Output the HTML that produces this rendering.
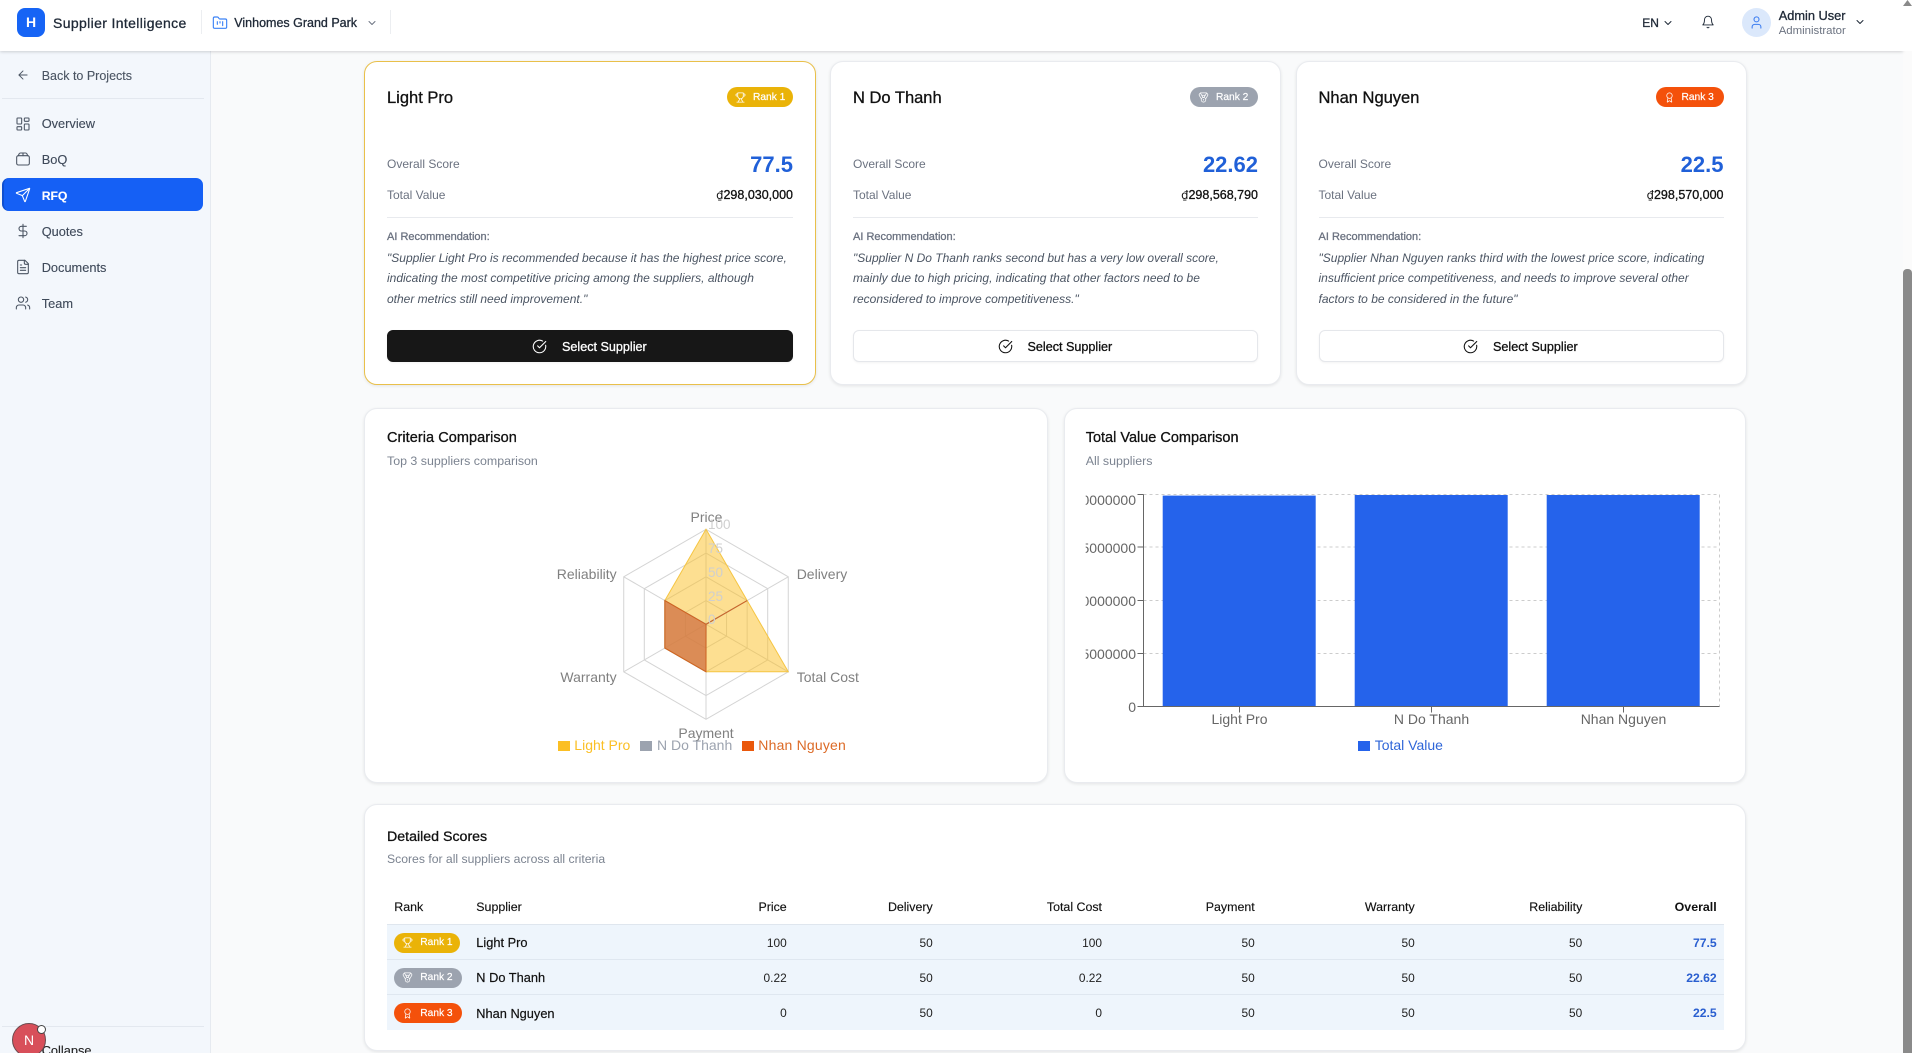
<!DOCTYPE html>
<html lang="en"><head><meta charset="utf-8"><title>Supplier Intelligence</title>
<style>
*{box-sizing:border-box}
html,body{margin:0;padding:0;width:1912px;height:1053px;overflow:hidden;background:#f9fafb;font-family:"Liberation Sans",sans-serif;color:#111827}
#app{position:absolute;left:0;top:0;width:1912px;height:1053px;overflow:hidden;background:#f9fafb}
.t{position:absolute;white-space:nowrap;line-height:20px}
.m{-webkit-text-stroke:.3px currentColor}
.i{position:absolute;fill:none;stroke:currentColor;stroke-width:2;stroke-linecap:round;stroke-linejoin:round}
.d{font-family:"DejaVu Sans",sans-serif;font-size:11.5px;-webkit-text-stroke:0}
header{position:absolute;left:0;top:0;width:1903px;height:51px;background:#fff;box-shadow:0 1px 3px rgba(0,0,0,.16);z-index:5}
.hw{position:absolute;left:1903px;top:0;width:9px;height:51px;background:#fff;z-index:5}
.sep{position:absolute;top:10px;width:1px;height:24px;background:#eceef1}
.logo{position:absolute;left:17px;top:8px;width:28px;height:29px;border-radius:8px;background:#1664f5;color:#fff;font-weight:700;font-size:14px;line-height:29px;text-align:center}
aside{position:absolute;left:0;top:51px;width:211px;height:1002px;background:#f3f7fc;border-right:1px solid #e6eaf0}
aside .t{left:41.7px;font-size:12.8px;color:#3f4a5a;-webkit-text-stroke:.12px currentColor}
aside .i{left:15px;width:16px;height:16px;stroke-width:1.6;color:#4b5563}
.div{position:absolute;left:2px;width:202px;height:1px;background:#e3e8ef}
.act{position:absolute;left:2px;top:127px;width:201px;height:33px;border-radius:7px;background:#1560f5;border-left:2px solid #0f4fd0}
.card{position:absolute;background:#fff;border:1px solid #e9ebef;border-radius:13px;box-shadow:0 1px 3px rgba(0,0,0,.09)}
.sup{top:61px;height:324px}
.gold{border:1.5px solid #e9c04a}
.name{left:22px;top:26px;font-size:16.5px;color:#111}
.badge{position:absolute;height:20px;border-radius:10px;color:#fff}
.badge span{position:absolute;left:26px;top:.5px;font-size:10.2px;line-height:20px;white-space:nowrap;-webkit-text-stroke:.2px #fff}
.badge .i{left:8px;top:4.5px;width:11px;height:11px;stroke-width:1.6}
.b1{background:#eab308;width:66px}.b2{background:#9ca3af;width:68px}.b3{background:#f4510b;width:68px}
.card .badge{top:25px;right:22px}
.lab{left:22px;font-size:12px;color:#6b7280}
.score{right:22px;top:93px;font-size:22px;font-weight:700;color:#2060d8}
.val{right:22px;top:122.7px;font-size:12.5px;color:#111}
.hr{position:absolute;left:22px;right:22px;top:155px;height:1px;background:#e8eaee}
.ai{left:22px;top:165px;font-size:11px;color:#6b7280}
.q{left:22px;font-size:12px;font-style:italic;color:#4b5563}
.btn{position:absolute;left:22px;right:22px;top:268px;height:32px;border-radius:6px;border:1px solid #e5e7eb;background:#fff;color:#111;box-shadow:0 1px 2px rgba(0,0,0,.05)}
.btn.dark{background:#171717;border-color:#171717;color:#fff}
.btn span{position:absolute;left:50%;margin-left:-28px;top:5.5px;font-size:12.6px;line-height:20px;white-space:nowrap;-webkit-text-stroke:.3px currentColor}
.btn .i{left:50%;margin-left:-58px;top:7.5px;width:15px;height:15px;stroke-width:1.7}
.ct{font-size:14.5px;color:#111}
.cs{font-size:12.4px;color:#7b8390}
svg text{font-family:"Liberation Sans",sans-serif}
table{position:absolute;left:387px;top:888px;width:1337px;border-collapse:collapse;table-layout:fixed;font-size:11.9px;color:#222}
th{height:36px;font-weight:400;font-size:12.4px;text-align:right;padding:2px 7.3px 0;color:#111;border-bottom:1px solid #dfe6ee;-webkit-text-stroke:.15px #111}
td{height:35px;text-align:right;padding:2px 7.3px 0;background:#eef5fc;border-bottom:1px solid #dfe7f0}
tr:last-child td{border-bottom:0;height:36px}
th.l,td.l{text-align:left}
td.s{font-size:12.8px;color:#111;-webkit-text-stroke:.2px #111}
td.o{font-weight:700;font-size:12.2px;color:#2a5fd0}
th.o{font-weight:700;-webkit-text-stroke:0}
td .badge{position:relative;display:block;top:0}
.sb{position:absolute;left:1903px;top:269px;width:9px;height:784px;background:#8a8a8a;border-radius:4px 4px 0 0;z-index:6}
.arrow{position:absolute;left:1903px;top:0;width:9px;height:6px;background:#8a8a8a;clip-path:polygon(50% 0,100% 100%,0 100%);z-index:6}
.track{position:absolute;left:1903px;top:51px;width:9px;height:1002px;background:#fbfbfb}
.nb{position:absolute;left:12px;top:1023px;width:34px;height:34px;border-radius:50%;background:#d84f5a;border:1px solid #6b4a4e;color:#fff;font-size:14px;line-height:32px;text-align:center;z-index:7}
.nd{position:absolute;left:37px;top:1024.5px;width:9px;height:9px;border-radius:50%;background:#fff;border:1px solid #444;z-index:8}
</style></head>
<body>
<div id="app">
<svg width="0" height="0" style="position:absolute">
<symbol id="chev" viewBox="0 0 24 24"><path d="m6 9 6 6 6-6"/></symbol>
<symbol id="folder" viewBox="0 0 24 24"><path d="M4 20h16a2 2 0 0 0 2-2V8a2 2 0 0 0-2-2h-7.93a2 2 0 0 1-1.66-.9l-.82-1.2A2 2 0 0 0 7.93 3H4a2 2 0 0 0-2 2v13c0 1.1.9 2 2 2Z"/><path d="M8 10v4M12 10v2M16 10v6"/></symbol>
<symbol id="bell" viewBox="0 0 24 24"><path d="M6 8a6 6 0 0 1 12 0c0 7 3 9 3 9H3s3-2 3-9"/><path d="M10.3 21a1.94 1.94 0 0 0 3.4 0"/></symbol>
<symbol id="user" viewBox="0 0 24 24"><path d="M19 21v-2a4 4 0 0 0-4-4H9a4 4 0 0 0-4 4v2"/><circle cx="12" cy="7" r="4"/></symbol>
<symbol id="back" viewBox="0 0 24 24"><path d="m12 19-7-7 7-7"/><path d="M19 12H5"/></symbol>
<symbol id="dash" viewBox="0 0 24 24"><rect x="3" y="3" width="7" height="9" rx="1"/><rect x="14" y="3" width="7" height="5" rx="1"/><rect x="14" y="12" width="7" height="9" rx="1"/><rect x="3" y="16" width="7" height="5" rx="1"/></symbol>
<symbol id="box" viewBox="0 0 24 24"><rect x="2.5" y="7" width="19" height="14" rx="2.5"/><path d="M5 7l1-2.5A2.5 2.5 0 0 1 8.2 3h7.6A2.5 2.5 0 0 1 18 4.5L19 7"/><path d="M12 3v4"/></symbol>
<symbol id="send" viewBox="0 0 24 24"><path d="M14.536 21.686a.5.5 0 0 0 .937-.024l6.5-19a.496.496 0 0 0-.635-.635l-19 6.5a.5.5 0 0 0-.024.937l7.93 3.18a2 2 0 0 1 1.112 1.11z"/><path d="m21.854 2.147-10.94 10.939"/></symbol>
<symbol id="dollar" viewBox="0 0 24 24"><path d="M12 2v20"/><path d="M17 5H9.5a3.5 3.5 0 0 0 0 7h5a3.5 3.5 0 0 1 0 7H6"/></symbol>
<symbol id="file" viewBox="0 0 24 24"><path d="M15 2H6a2 2 0 0 0-2 2v16a2 2 0 0 0 2 2h12a2 2 0 0 0 2-2V7Z"/><path d="M14 2v4a2 2 0 0 0 2 2h4"/><path d="M10 9H8M16 13H8M16 17H8"/></symbol>
<symbol id="users" viewBox="0 0 24 24"><path d="M16 21v-2a4 4 0 0 0-4-4H6a4 4 0 0 0-4 4v2"/><circle cx="9" cy="7" r="4"/><path d="M22 21v-2a4 4 0 0 0-3-3.87"/><path d="M16 3.13a4 4 0 0 1 0 7.75"/></symbol>
<symbol id="check" viewBox="0 0 24 24"><path d="M21.801 10A10 10 0 1 1 17 3.335"/><path d="m9 11 3 3L22 4"/></symbol>
<symbol id="trophy" viewBox="0 0 24 24"><path d="M6 9H4.5a2.5 2.5 0 0 1 0-5H6"/><path d="M18 9h1.5a2.5 2.5 0 0 0 0-5H18"/><path d="M4 22h16"/><path d="M10 14.66V17c0 .55-.47.98-.97 1.21C7.85 18.75 7 20.24 7 22"/><path d="M14 14.66V17c0 .55.47.98.97 1.21C16.15 18.75 17 20.24 17 22"/><path d="M18 2H6v7a6 6 0 0 0 12 0V2Z"/></symbol>
<symbol id="medal" viewBox="0 0 24 24"><path d="M7.21 15 2.66 7.14a2 2 0 0 1 .13-2.2L4.4 2.8A2 2 0 0 1 6 2h12a2 2 0 0 1 1.6.8l1.6 2.14a2 2 0 0 1 .14 2.2L16.79 15"/><path d="M11 12 5.12 2.2"/><path d="m13 12 5.88-9.8"/><path d="M8 7h8"/><circle cx="12" cy="17" r="5"/><path d="M12 18v-2h-.5"/></symbol>
<symbol id="award" viewBox="0 0 24 24"><path d="m15.477 12.89 1.515 8.526a.5.5 0 0 1-.81.47l-3.58-2.687a1 1 0 0 0-1.197 0l-3.586 2.686a.5.5 0 0 1-.81-.469l1.514-8.526"/><circle cx="12" cy="8" r="6"/></symbol>
</svg>

<div class="track"></div>

<header>
<div class="logo">H</div>
<div class="t m" style="left:53px;top:12.5px;font-size:14px;letter-spacing:.36px;color:#1f2937">Supplier Intelligence</div>
<div class="sep" style="left:201px"></div>
<svg class="i" style="left:212px;top:15px;width:16px;height:16px;color:#3b82f6;stroke-width:1.7"><use href="#folder"/></svg>
<div class="t m" style="left:234.3px;top:12.5px;font-size:12.5px;color:#1f2937">Vinhomes Grand Park</div>
<svg class="i" style="left:366px;top:16.5px;width:12px;height:12px;color:#6b7280;stroke-width:2"><use href="#chev"/></svg>
<div class="sep" style="left:390px"></div>
<div class="t m" style="left:1642.3px;top:12.5px;font-size:12px;color:#1f2937">EN</div>
<svg class="i" style="left:1662px;top:16.5px;width:12px;height:12px;color:#1f2937"><use href="#chev"/></svg>
<svg class="i" style="left:1701px;top:15px;width:14px;height:14px;color:#1f2937;stroke-width:1.6"><use href="#bell"/></svg>
<div style="position:absolute;left:1742px;top:8px;width:29px;height:29px;border-radius:50%;background:#dbe8fb"></div>
<svg class="i" style="left:1749px;top:14.5px;width:15px;height:15px;color:#3b7cf0;stroke-width:1.7"><use href="#user"/></svg>
<div class="t m" style="left:1778.7px;top:5.5px;font-size:12.8px;color:#1f2937">Admin User</div>
<div class="t" style="left:1778.7px;top:21px;font-size:11.4px;color:#6b7280">Administrator</div>
<svg class="i" style="left:1854px;top:16px;width:12px;height:12px;color:#1f2937"><use href="#chev"/></svg>
</header>
<div class="hw"></div>
<div class="arrow"></div>
<div class="sb"></div>

<aside>
<svg class="i" style="top:17px;left:16px;width:14px;height:14px"><use href="#back"/></svg>
<div class="t" style="top:15px;font-size:12.5px;color:#4b5563">Back to Projects</div>
<div class="div" style="top:47px"></div>
<svg class="i" style="top:64.5px"><use href="#dash"/></svg>
<div class="t" style="top:63px">Overview</div>
<svg class="i" style="top:100px"><use href="#box"/></svg>
<div class="t" style="top:99px">BoQ</div>
<div class="act"></div>
<svg class="i" style="top:135.5px;color:#fff"><use href="#send"/></svg>
<div class="t" style="top:135px;color:#fff;font-weight:700;font-size:12.2px">RFQ</div>
<svg class="i" style="top:171.5px"><use href="#dollar"/></svg>
<div class="t" style="top:171px">Quotes</div>
<svg class="i" style="top:207.5px"><use href="#file"/></svg>
<div class="t" style="top:207px">Documents</div>
<svg class="i" style="top:243.5px"><use href="#users"/></svg>
<div class="t" style="top:243px">Team</div>
<div class="div" style="top:975px"></div>
<div class="t" style="top:989.5px;font-size:12.8px;color:#222">Collapse</div>
</aside>
<div class="nb">N</div><div class="nd"></div>

<main>
<div class="card sup gold" style="left:364px;width:452px">
<div class="t name m">Light Pro</div>
<div class="badge b1"><svg class="i"><use href="#trophy"/></svg><span>Rank 1</span></div>
<div class="t lab" style="top:92px">Overall Score</div><div class="t score">77.5</div>
<div class="t lab" style="top:122.7px">Total Value</div><div class="t val m"><span class="d">₫</span>298,030,000</div>
<div class="hr"></div>
<div class="t ai m">AI Recommendation:</div>
<div class="t q" style="top:185.7px">"Supplier Light Pro is recommended because it has the highest price score,</div>
<div class="t q" style="top:205.5px">indicating the most competitive pricing among the suppliers, although</div>
<div class="t q" style="top:226.5px">other metrics still need improvement."</div>
<div class="btn dark"><svg class="i"><use href="#check"/></svg><span>Select Supplier</span></div>
</div>

<div class="card sup" style="left:830px;width:451px">
<div class="t name m">N Do Thanh</div>
<div class="badge b2"><svg class="i"><use href="#medal"/></svg><span>Rank 2</span></div>
<div class="t lab" style="top:92px">Overall Score</div><div class="t score">22.62</div>
<div class="t lab" style="top:122.7px">Total Value</div><div class="t val m"><span class="d">₫</span>298,568,790</div>
<div class="hr"></div>
<div class="t ai m">AI Recommendation:</div>
<div class="t q" style="top:185.7px">"Supplier N Do Thanh ranks second but has a very low overall score,</div>
<div class="t q" style="top:205.5px">mainly due to high pricing, indicating that other factors need to be</div>
<div class="t q" style="top:226.5px">reconsidered to improve competitiveness."</div>
<div class="btn"><svg class="i"><use href="#check"/></svg><span>Select Supplier</span></div>
</div>

<div class="card sup" style="left:1295.5px;width:451px">
<div class="t name m">Nhan Nguyen</div>
<div class="badge b3"><svg class="i"><use href="#award"/></svg><span>Rank 3</span></div>
<div class="t lab" style="top:92px">Overall Score</div><div class="t score">22.5</div>
<div class="t lab" style="top:122.7px">Total Value</div><div class="t val m"><span class="d">₫</span>298,570,000</div>
<div class="hr"></div>
<div class="t ai m">AI Recommendation:</div>
<div class="t q" style="top:185.7px">"Supplier Nhan Nguyen ranks third with the lowest price score, indicating</div>
<div class="t q" style="top:205.5px">insufficient price competitiveness, and needs to improve several other</div>
<div class="t q" style="top:226.5px">factors to be considered in the future"</div>
<div class="btn"><svg class="i"><use href="#check"/></svg><span>Select Supplier</span></div>
</div>

<div class="card" style="left:364px;top:408px;width:684px;height:375px"></div>
<div class="card" style="left:1064px;top:408px;width:682px;height:375px"></div>
<div class="t ct m" style="left:387px;top:428px;letter-spacing:.05px">Criteria Comparison</div>
<div class="t cs" style="left:387px;top:450.7px">Top 3 suppliers comparison</div>
<div class="t ct m" style="left:1085.7px;top:428px">Total Value Comparison</div>
<div class="t cs" style="left:1085.7px;top:450.7px">All suppliers</div>

<svg style="position:absolute;left:0;top:0" width="1912" height="1053" viewBox="0 0 1912 1053">
<defs><clipPath id="yc"><rect x="1085.7" y="480" width="70" height="240"/></clipPath></defs>
<g fill="none" stroke="#d4d4d4" stroke-width="1">
<polygon points="706,600.55 726.57,612.43 726.57,636.18 706,648.05 685.43,636.18 685.43,612.43"/>
<polygon points="706,576.8 747.14,600.55 747.14,648.05 706,671.8 664.86,648.05 664.86,600.55"/>
<polygon points="706,553.05 767.7,588.68 767.7,659.93 706,695.55 644.3,659.93 644.3,588.68"/>
<polygon points="706,529.3 788.27,576.8 788.27,671.8 706,719.3 623.73,671.8 623.73,576.8"/>
<path d="M706 624.3V529.3M706 624.3L788.27 576.8M706 624.3L788.27 671.8M706 624.3V719.3M706 624.3L623.73 671.8M706 624.3L623.73 576.8"/>
</g>
<polygon points="706,529.3 747.14,600.55 788.27,671.8 706,671.8 664.86,648.05 664.86,600.55" fill="#fbbf24" fill-opacity=".5" stroke="#f5c542"/>
<polygon points="706,624.09 747.14,600.55 706.18,624.4 706,671.8 664.86,648.05 664.86,600.55" fill="#9ca3af" fill-opacity=".5" stroke="#9ca3af"/>
<polygon points="706,624.3 747.14,600.55 706,624.3 706,671.8 664.86,648.05 664.86,600.55" fill="#ea580c" fill-opacity=".5" stroke="#d2641e"/>
<g font-size="14" fill="#808080">
<text x="706.5" y="522" text-anchor="middle">Price</text>
<text x="796.7" y="579">Delivery</text>
<text x="796.7" y="682">Total Cost</text>
<text x="706" y="738" text-anchor="middle">Payment</text>
<text x="616.7" y="682" text-anchor="end">Warranty</text>
<text x="616.7" y="579" text-anchor="end">Reliability</text>
</g>
<g font-size="13.5" fill="#cfcfcf">
<text x="708" y="529">100</text><text x="708" y="553">75</text><text x="708" y="577">50</text><text x="708" y="601">25</text><text x="708" y="624">0</text>
</g>
<rect x="558" y="741" width="12" height="10" fill="#fbbf24"/><text x="574.3" y="750" font-size="14" fill="#fbbf24">Light Pro</text>
<rect x="640" y="741" width="12" height="10" fill="#9ca3af"/><text x="657" y="750" font-size="14" fill="#9ca3af">N Do Thanh</text>
<rect x="742" y="741" width="12" height="10" fill="#ea580c"/><text x="758.3" y="750" font-size="14" fill="#dc6a26" textLength="87.5">Nhan Nguyen</text>

<g stroke="#ccc" stroke-dasharray="3 3" fill="none">
<path d="M1143.5 494.5H1719.5M1143.5 547H1719.5M1143.5 600.5H1719.5M1143.5 653.5H1719.5M1719.5 494.5V706.5"/>
</g>
<rect x="1162.7" y="495.6" width="153" height="211" fill="#2563eb"/>
<rect x="1354.7" y="495" width="153" height="211.6" fill="#2563eb"/>
<rect x="1546.7" y="495" width="153" height="211.6" fill="#2563eb"/>
<g stroke="#666" fill="none"><path d="M1143.5 494.5V706.5H1719.5M1137.5 494.5H1143.5M1137.5 547H1143.5M1137.5 600.5H1143.5M1137.5 653.5H1143.5M1137.5 706.5H1143.5M1239.5 706.5V712.5M1431.5 706.5V712.5M1623.5 706.5V712.5"/></g>
<g font-size="14" fill="#666" text-anchor="end" clip-path="url(#yc)">
<text x="1136" y="505">300000000</text><text x="1136" y="553">225000000</text><text x="1136" y="606">150000000</text><text x="1136" y="659">75000000</text><text x="1136" y="712">0</text>
</g>
<g font-size="14" fill="#666" text-anchor="middle">
<text x="1239.5" y="724">Light Pro</text><text x="1431.5" y="724">N Do Thanh</text><text x="1623.5" y="724">Nhan Nguyen</text>
</g>
<rect x="1358" y="741" width="12" height="10" fill="#2563eb"/><text x="1374.7" y="750" font-size="14" fill="#2f66d8">Total Value</text>
</svg>

<div class="card" style="left:364px;top:804px;width:1382px;height:247px"></div>
<div class="t ct m" style="left:387px;top:826.5px;font-size:14.2px">Detailed Scores</div>
<div class="t cs" style="left:387px;top:849.3px;font-size:12.2px">Scores for all suppliers across all criteria</div>
<table>
<colgroup><col style="width:82px"><col style="width:171px"><col style="width:154px"><col style="width:146px"><col style="width:169.3px"><col style="width:152.7px"><col style="width:160px"><col style="width:167.6px"><col style="width:134.4px"></colgroup>
<tr><th class="l">Rank</th><th class="l">Supplier</th><th>Price</th><th>Delivery</th><th>Total Cost</th><th>Payment</th><th>Warranty</th><th>Reliability</th><th class="o">Overall</th></tr>
<tr><td class="l"><div class="badge b1"><svg class="i"><use href="#trophy"/></svg><span>Rank 1</span></div></td><td class="l s">Light Pro</td><td>100</td><td>50</td><td>100</td><td>50</td><td>50</td><td>50</td><td class="o">77.5</td></tr>
<tr><td class="l"><div class="badge b2"><svg class="i"><use href="#medal"/></svg><span>Rank 2</span></div></td><td class="l s">N Do Thanh</td><td>0.22</td><td>50</td><td>0.22</td><td>50</td><td>50</td><td>50</td><td class="o">22.62</td></tr>
<tr><td class="l"><div class="badge b3"><svg class="i"><use href="#award"/></svg><span>Rank 3</span></div></td><td class="l s">Nhan Nguyen</td><td>0</td><td>50</td><td>0</td><td>50</td><td>50</td><td>50</td><td class="o">22.5</td></tr>
</table>
</main>
</div>
</body></html>
